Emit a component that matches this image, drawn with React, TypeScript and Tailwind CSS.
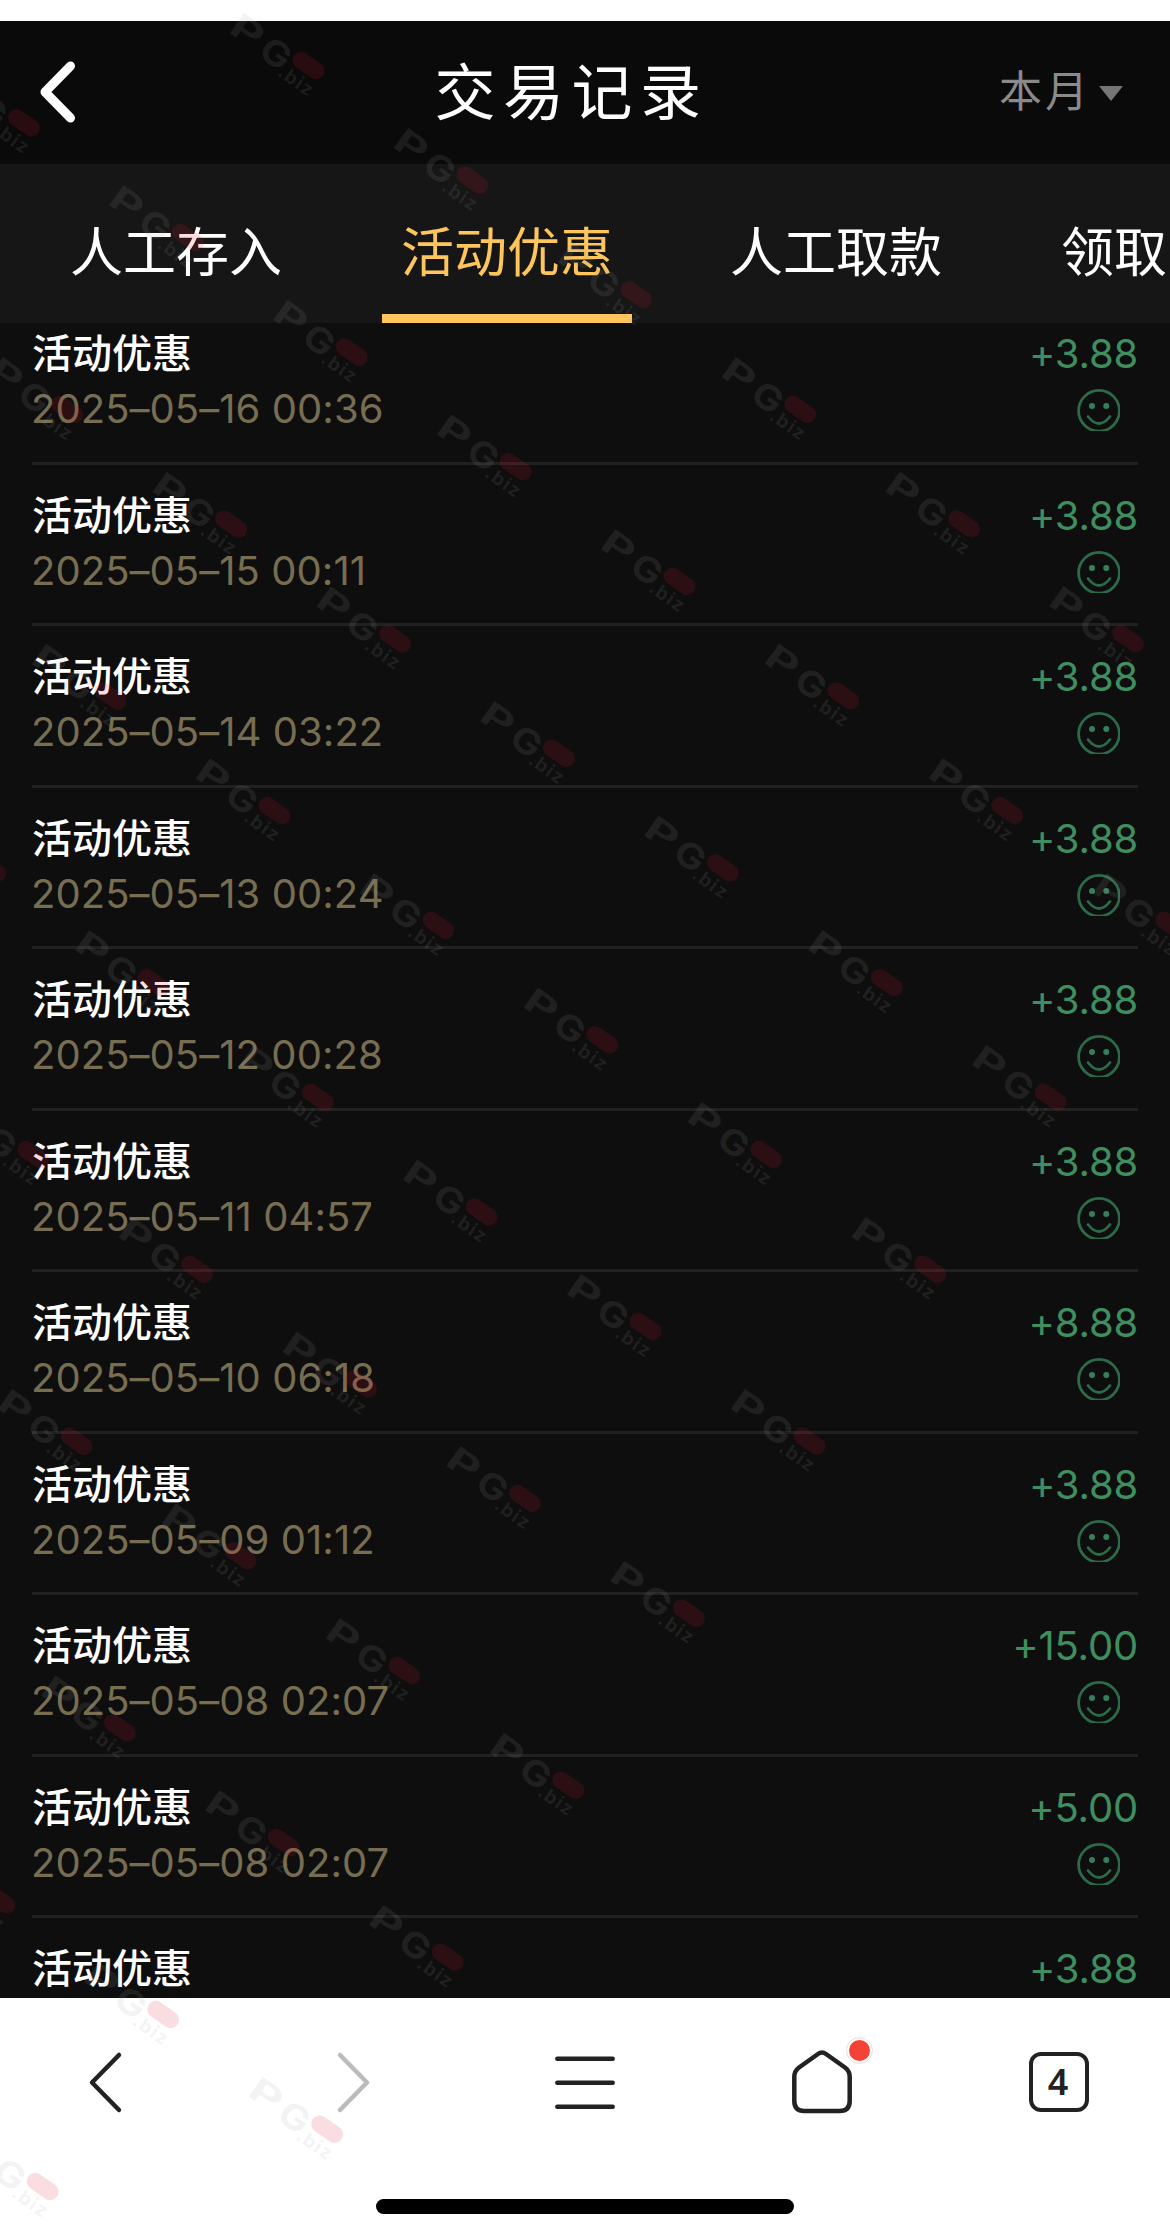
import React from 'react';

const records = [
  ['2025–05–16 00:36', '+3.88'],
  ['2025–05–15 00:11', '+3.88'],
  ['2025–05–14 03:22', '+3.88'],
  ['2025–05–13 00:24', '+3.88'],
  ['2025–05–12 00:28', '+3.88'],
  ['2025–05–11 04:57', '+3.88'],
  ['2025–05–10 06:18', '+8.88'],
  ['2025–05–09 01:12', '+3.88'],
  ['2025–05–08 02:07', '+15.00'],
  ['2025–05–08 02:07', '+5.00'],
];

const tabs = ['人工存入', '活动优惠', '人工取款', '领取'];

function Smiley() {
  return (
    <svg width="43" height="42" viewBox="0 0 43 42" fill="none" stroke="#2c6b48" className="mr-[18px] block">
      <circle cx="22" cy="21.8" r="20.4" strokeWidth="2.8" />
      <circle cx="15" cy="17" r="3" fill="#35805a" stroke="none" />
      <circle cx="29.3" cy="17" r="3" fill="#35805a" stroke="none" />
      <path d="M11 27.5 Q22 41.5 33 27.5" strokeWidth="2.8" strokeLinecap="round" />
    </svg>
  );
}

function RecordRow({ date, amount }: { date?: string; amount: string }) {
  return (
    <li className="flex h-[161.55px] shrink-0 justify-between border-b-[3px] border-[#212121] pt-[23px]">
      <div className="flex flex-col whitespace-nowrap">
        <span className="h-14 text-[40px] leading-[56px] font-medium text-white">活动优惠</span>
        {date && (
          <span className="-ml-px h-[52px] pt-px text-[40px] leading-[52px] font-normal tracking-[0.05px] text-[#776d51]">{date}</span>
        )}
      </div>
      <div className="flex flex-col items-end">
        <span className="h-14 text-[40px] leading-[56px] font-normal tracking-[-0.2px] text-[#3f8e5f]">{amount}</span>
        {date && (
          <span className="pt-[7px]">
            <Smiley />
          </span>
        )}
      </div>
    </li>
  );
}

/* Tiled brand stamps laid on a slanted lattice over the whole screen. */
function Watermark() {
  const marks: { x: number; y: number }[] = [];
  for (let j = 0; j < 10; j++) {
    for (let i = -1; i < 7; i++) {
      const x = 230 + i * 163.9 - j * 120.6;
      const y = 15.5 + i * 114.6 + j * 172;
      if (x > -95 && x < 1170 && y > -80 && y < 2237) marks.push({ x, y });
    }
  }
  return (
    <svg width="1170" height="2237" viewBox="0 0 1170 2237" className="pointer-events-none absolute inset-0">
      {marks.map((m) => (
        <g key={`${m.x}-${m.y}`} transform={`translate(${m.x} ${m.y})`} fontFamily="Inter, sans-serif">
          <g fill="#a0a0a0" fillOpacity="0.13" fontWeight="700" textAnchor="middle">
            <text y="12" transform="translate(17.5 15.5) rotate(35) scale(1.5 1)" fontSize="34">P</text>
            <text y="12.5" transform="translate(46 38) rotate(35) scale(1.15 1)" fontSize="35">G</text>
            <text y="6.5" transform="translate(66.5 65.5) rotate(35)" fontSize="19" letterSpacing="1.4">.biz</text>
          </g>
          <rect x="-17.5" y="-8.5" width="35" height="17" rx="8.5" fill="#e0182c" fillOpacity="0.15" transform="translate(78.5 50) rotate(35)" />
        </g>
      ))}
    </svg>
  );
}

export default function App() {
  return (
    <div className="relative flex h-[2237px] w-[1170px] flex-col overflow-hidden bg-white pt-[21px] font-['Inter','Noto_Sans_CJK_SC',sans-serif]">
      <header className="grid h-[143px] shrink-0 grid-cols-[1fr_auto_1fr] items-center bg-[#0a0a0a] pr-[47px] pl-[38px]">
        <svg width="40" height="64" viewBox="0 0 40 64" fill="none" stroke="#fff" strokeWidth="9" strokeLinecap="round" strokeLinejoin="round" className="-mt-0.5">
          <path d="M32.5 6 L7 32 L32.5 58" />
        </svg>
        <h1 className="mr-[9px] -ml-[9px] text-[61px] leading-[80px] font-normal tracking-[7.5px] text-white">交易记录</h1>
        <div className="-mt-1 flex items-center justify-end">
          <span className="text-[43px] leading-[60px] font-normal tracking-[3px] text-[#8a8a8a]">本月</span>
          <svg width="24" height="15" viewBox="0 0 24 15" className="mt-1.5 ml-2">
            <path d="M0 0 H24 L12 15 Z" fill="#757575" />
          </svg>
        </div>
      </header>

      <nav className="flex h-[159px] shrink-0 gap-[80px] overflow-hidden bg-[#161616] pl-[52px]">
        {tabs.map((t, i) => (
          <div
            key={t}
            className={
              i === 1
                ? 'flex w-[250px] shrink-0 border-b-[9px] border-[#fec55c] pt-[53px] pl-[19px] text-[#fec55c]'
                : i === 3
                  ? 'flex shrink-0 pt-[53px] pl-[19px] text-white'
                  : 'flex w-[250px] shrink-0 pt-[53px] pl-[18px] text-white'
            }
          >
            <span className="text-[53px] leading-[72px] font-normal whitespace-nowrap">{t}</span>
          </div>
        ))}
      </nav>

      <main className="h-[1675px] shrink-0 overflow-hidden bg-[#0e0e0e] px-8">
        <ul className="mt-[-20px] flex flex-col">
          {records.map(([date, amount], i) => (
            <RecordRow key={i} date={date} amount={amount} />
          ))}
          <RecordRow amount="+3.88" />
        </ul>
      </main>

      <footer className="flex flex-1 flex-col items-center bg-white">
        <div className="flex h-[201px] w-full justify-between pt-[50px] pr-[81px] pl-[81px]">
          <svg width="60" height="68" viewBox="0 0 60 68" fill="none" stroke="#222" strokeWidth="4.5" strokeLinecap="round" strokeLinejoin="round">
            <path d="M38 7 L11 34.5 L38 62" />
          </svg>
          <svg width="60" height="68" viewBox="0 0 60 68" fill="none" stroke="#bbb" strokeWidth="4.5" strokeLinecap="round" strokeLinejoin="round">
            <path d="M22 7 L49 34.5 L22 62" />
          </svg>
          <svg width="60" height="68" viewBox="0 0 60 68" fill="none" stroke="#222" strokeWidth="4.5" strokeLinecap="round">
            <path d="M2.3 10.7 H57.7 M2.3 34.7 H57.7 M2.3 58.7 H57.7" />
          </svg>
          <svg width="60" height="68" viewBox="0 0 60 68" fill="none" stroke="#222" strokeWidth="4.5" strokeLinejoin="round" className="overflow-visible">
            <path d="M26 6 Q30 3 34 6 L53 19.5 Q57.7 23 57.7 29 V53 Q57.7 63 47.7 63 H12.3 Q2.3 63 2.3 53 V29 Q2.3 23 7 19.5 Z" />
            <circle cx="67.5" cy="2.5" r="13" fill="#fff" stroke="#f3d9d6" strokeWidth="1" />
            <circle cx="67.5" cy="2.5" r="10.5" fill="#f44336" stroke="none" />
          </svg>
          <div className="mt-1 flex h-[60px] w-[60px] items-center justify-center rounded-xl border-[4.5px] border-[#222] pr-0.5 font-['Noto_Sans'] text-[36px] leading-none font-semibold text-[#222]">
            4
          </div>
        </div>
        <div className="h-[15px] w-[418px] rounded-full bg-black" />
      </footer>

      <Watermark />
    </div>
  );
}
